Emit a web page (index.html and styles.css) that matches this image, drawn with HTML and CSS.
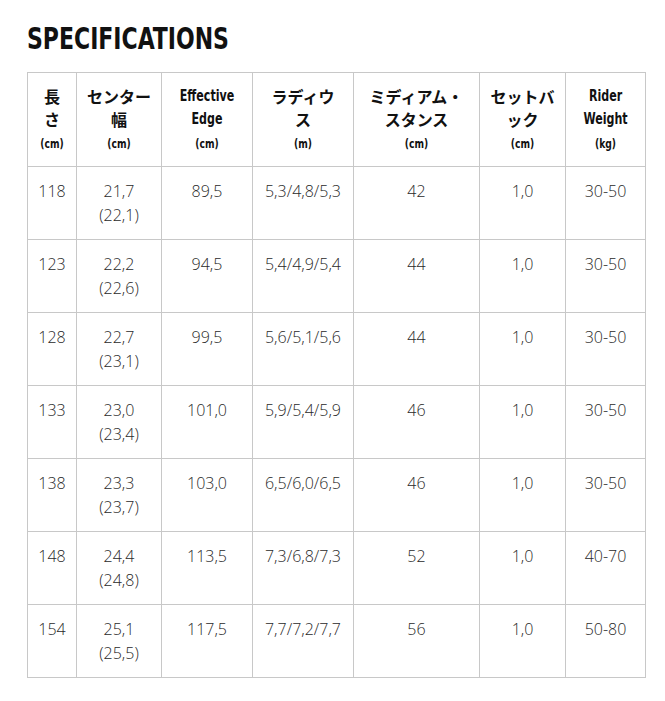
FILE: index.html
```html
<!DOCTYPE html>
<html lang="ja">
<head>
<meta charset="utf-8">
<link rel="stylesheet" href="styles.css">
</head>
<body>
<div class="page">
  <h2 class="title"><span>SPECIFICATIONS</span></h2>
  <table class="spec">
    <colgroup>
      <col class="c1"><col class="c2"><col class="c3"><col class="c4"><col class="c5"><col class="c6"><col class="c7">
    </colgroup>
    <thead>
      <tr>
        <th><span class="jp">長<br>さ</span><span class="unit">(cm)</span></th>
        <th><span class="jp">センター<br>幅</span><span class="unit">(cm)</span></th>
        <th><span class="en">Effective<br>Edge</span><span class="unit">(cm)</span></th>
        <th><span class="jp">ラディウ<br>ス</span><span class="unit">(m)</span></th>
        <th><span class="jp">ミディアム・<br>スタンス</span><span class="unit">(cm)</span></th>
        <th><span class="jp">セットバ<br>ック</span><span class="unit">(cm)</span></th>
        <th><span class="en">Rider<br>Weight</span><span class="unit">(kg)</span></th>
      </tr>
    </thead>
    <tbody>
      <tr><td>118</td><td>21,7<br>(22,1)</td><td>89,5</td><td>5,3/4,8/5,3</td><td>42</td><td>1,0</td><td>30-50</td></tr>
      <tr><td>123</td><td>22,2<br>(22,6)</td><td>94,5</td><td>5,4/4,9/5,4</td><td>44</td><td>1,0</td><td>30-50</td></tr>
      <tr><td>128</td><td>22,7<br>(23,1)</td><td>99,5</td><td>5,6/5,1/5,6</td><td>44</td><td>1,0</td><td>30-50</td></tr>
      <tr><td>133</td><td>23,0<br>(23,4)</td><td>101,0</td><td>5,9/5,4/5,9</td><td>46</td><td>1,0</td><td>30-50</td></tr>
      <tr><td>138</td><td>23,3<br>(23,7)</td><td>103,0</td><td>6,5/6,0/6,5</td><td>46</td><td>1,0</td><td>30-50</td></tr>
      <tr><td>148</td><td>24,4<br>(24,8)</td><td>113,5</td><td>7,3/6,8/7,3</td><td>52</td><td>1,0</td><td>40-70</td></tr>
      <tr><td>154</td><td>25,1<br>(25,5)</td><td>117,5</td><td>7,7/7,2/7,7</td><td>56</td><td>1,0</td><td>50-80</td></tr>
    </tbody>
  </table>
</div>
</body>
</html>
```
FILE: styles.css
```css
html, body {
  margin: 0;
  padding: 0;
  background: #fff;
}
.page {
  padding: 21px 0 0 27px;
  font-family: "Open Sans", "Noto Sans CJK JP", sans-serif;
}
.title {
  margin: 0 0 15px 0;
  height: 36px;
  font-family: "DejaVu Sans Condensed", "DejaVu Sans", sans-serif;
  font-weight: bold;
  font-size: 30px;
  line-height: 36px;
  color: #111;
}
.title span {
  display: inline-block;
  transform: scaleX(0.815);
  transform-origin: left center;
  white-space: nowrap;
}
.spec {
  border-collapse: collapse;
  table-layout: fixed;
  width: 619px;
  border: 1px solid #c8c8c8;
}
.c1 { width: 49px; }
.c2 { width: 85px; }
.c3 { width: 91px; }
.c4 { width: 101px; }
.c5 { width: 126px; }
.c6 { width: 86px; }
.c7 { width: 80px; }
.spec th, .spec td {
  border: 1px solid #c8c8c8;
  text-align: center;
  vertical-align: top;
  padding: 0;
}
.spec th {
  height: 94px;
  box-sizing: border-box;
  padding: 12px 2px 0;
  color: #111;
  font-weight: bold;
}
.jp {
  display: block;
  font-family: "Noto Sans CJK JP", sans-serif;
  font-size: 16px;
  line-height: 23px;
  font-weight: bold;
}
.en {
  display: block;
  font-family: "DejaVu Sans Condensed", "DejaVu Sans", sans-serif;
  font-size: 15px;
  line-height: 23px;
  font-weight: bold;
  transform: scaleX(0.82);
}
.unit {
  display: block;
  margin-top: 3px;
  font-family: "DejaVu Sans Condensed", "DejaVu Sans", sans-serif;
  font-size: 12px;
  line-height: 20px;
  font-weight: bold;
  transform: scaleX(0.85);
}
.spec td {
  height: 73px;
  box-sizing: border-box;
  padding-top: 12px;
  font-size: 16px;
  font-weight: 300;
  line-height: 24px;
  color: #2a2a2a;
}
```
